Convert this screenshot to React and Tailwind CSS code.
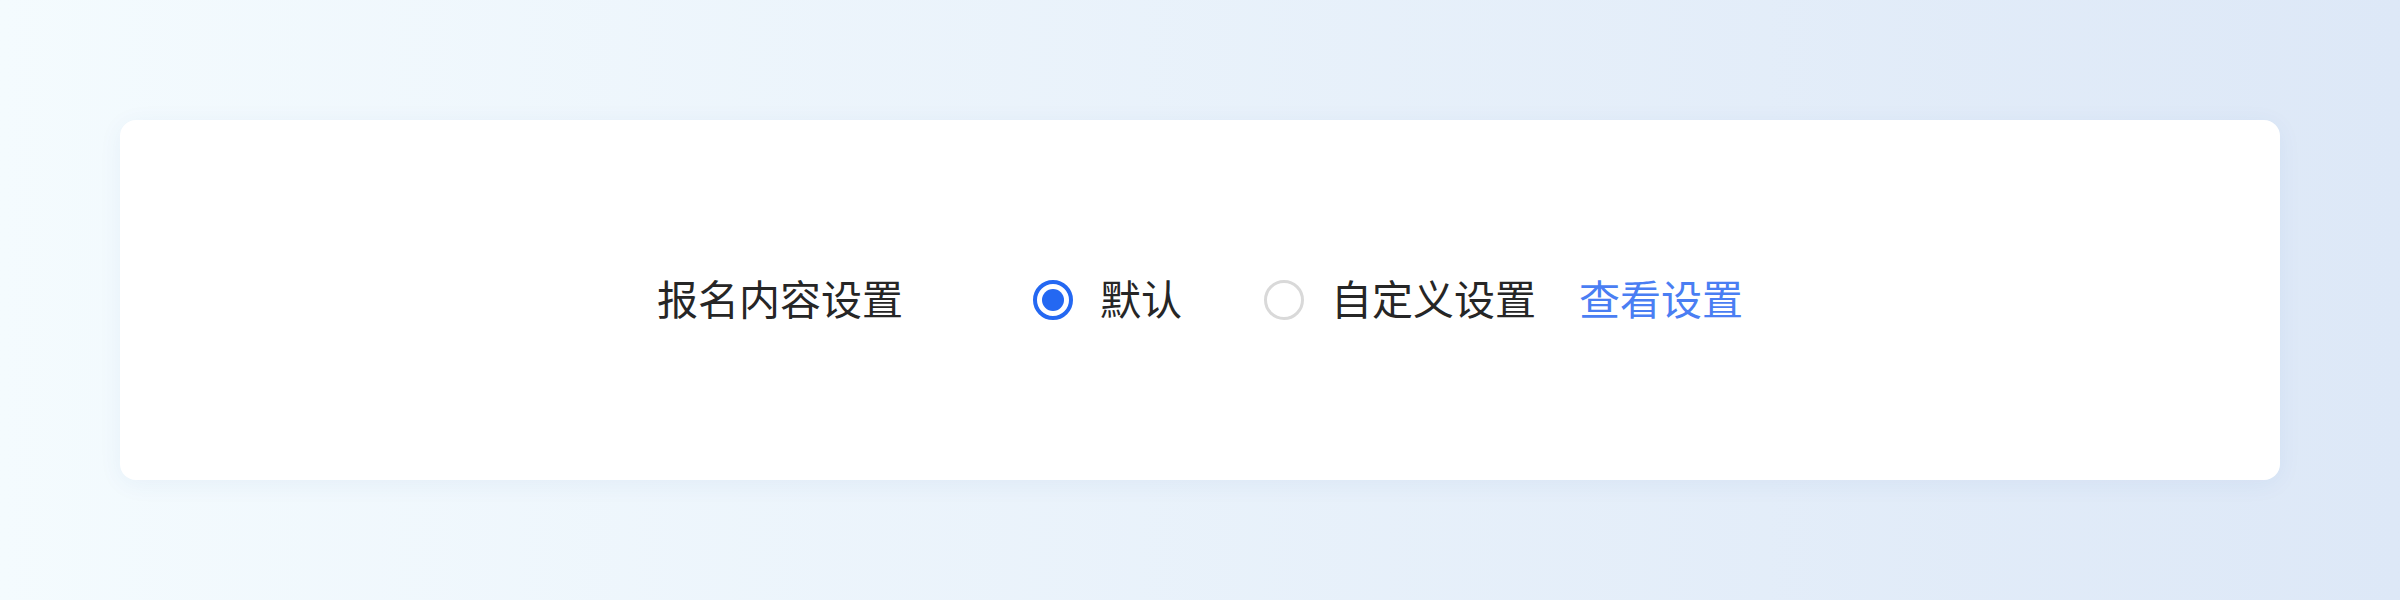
import { useState } from "react";

const options = [
  { value: "default", label: "默认" },
  { value: "custom", label: "自定义设置" },
];

const Radio = ({ checked }) => (
  <span
    className={
      checked
        ? "flex h-10 w-10 shrink-0 items-center justify-center rounded-full border-[4px] border-[#2468f2]"
        : "flex h-10 w-10 shrink-0 items-center justify-center rounded-full border-[3px] border-[#d9d9d9]"
    }
  >
    {checked && <span className="h-[22px] w-[22px] rounded-full bg-[#2468f2]" />}
  </span>
);

export default function App() {
  const [mode, setMode] = useState("default");

  return (
    <div
      className="flex h-[600px] w-full bg-gradient-to-r from-[#f4fbfe] to-[#dde8f7] p-[120px] text-[#262626]"
      style={{ fontFamily: '"Noto Sans CJK SC", "Noto Sans", sans-serif' }}
    >
      <div className="flex flex-1 items-center justify-center rounded-2xl bg-white shadow-[0_4px_24px_rgba(40,90,170,0.06)]">
        <div className="flex items-center text-[41px] leading-none">
          <span className="mr-[130px] pb-1.5">报名内容设置</span>
          {options.map((opt, i) => (
            <button
              key={opt.value}
              onClick={() => setMode(opt.value)}
              className={i > 0 ? "ml-[82px] flex items-center gap-[27px]" : "flex items-center gap-[27px]"}
            >
              <Radio checked={mode === opt.value} />
              <span className="pb-1.5">{opt.label}</span>
            </button>
          ))}
          <a className="ml-[43px] cursor-pointer pb-1.5 text-[#4a7ef3]">查看设置</a>
        </div>
      </div>
    </div>
  );
}
